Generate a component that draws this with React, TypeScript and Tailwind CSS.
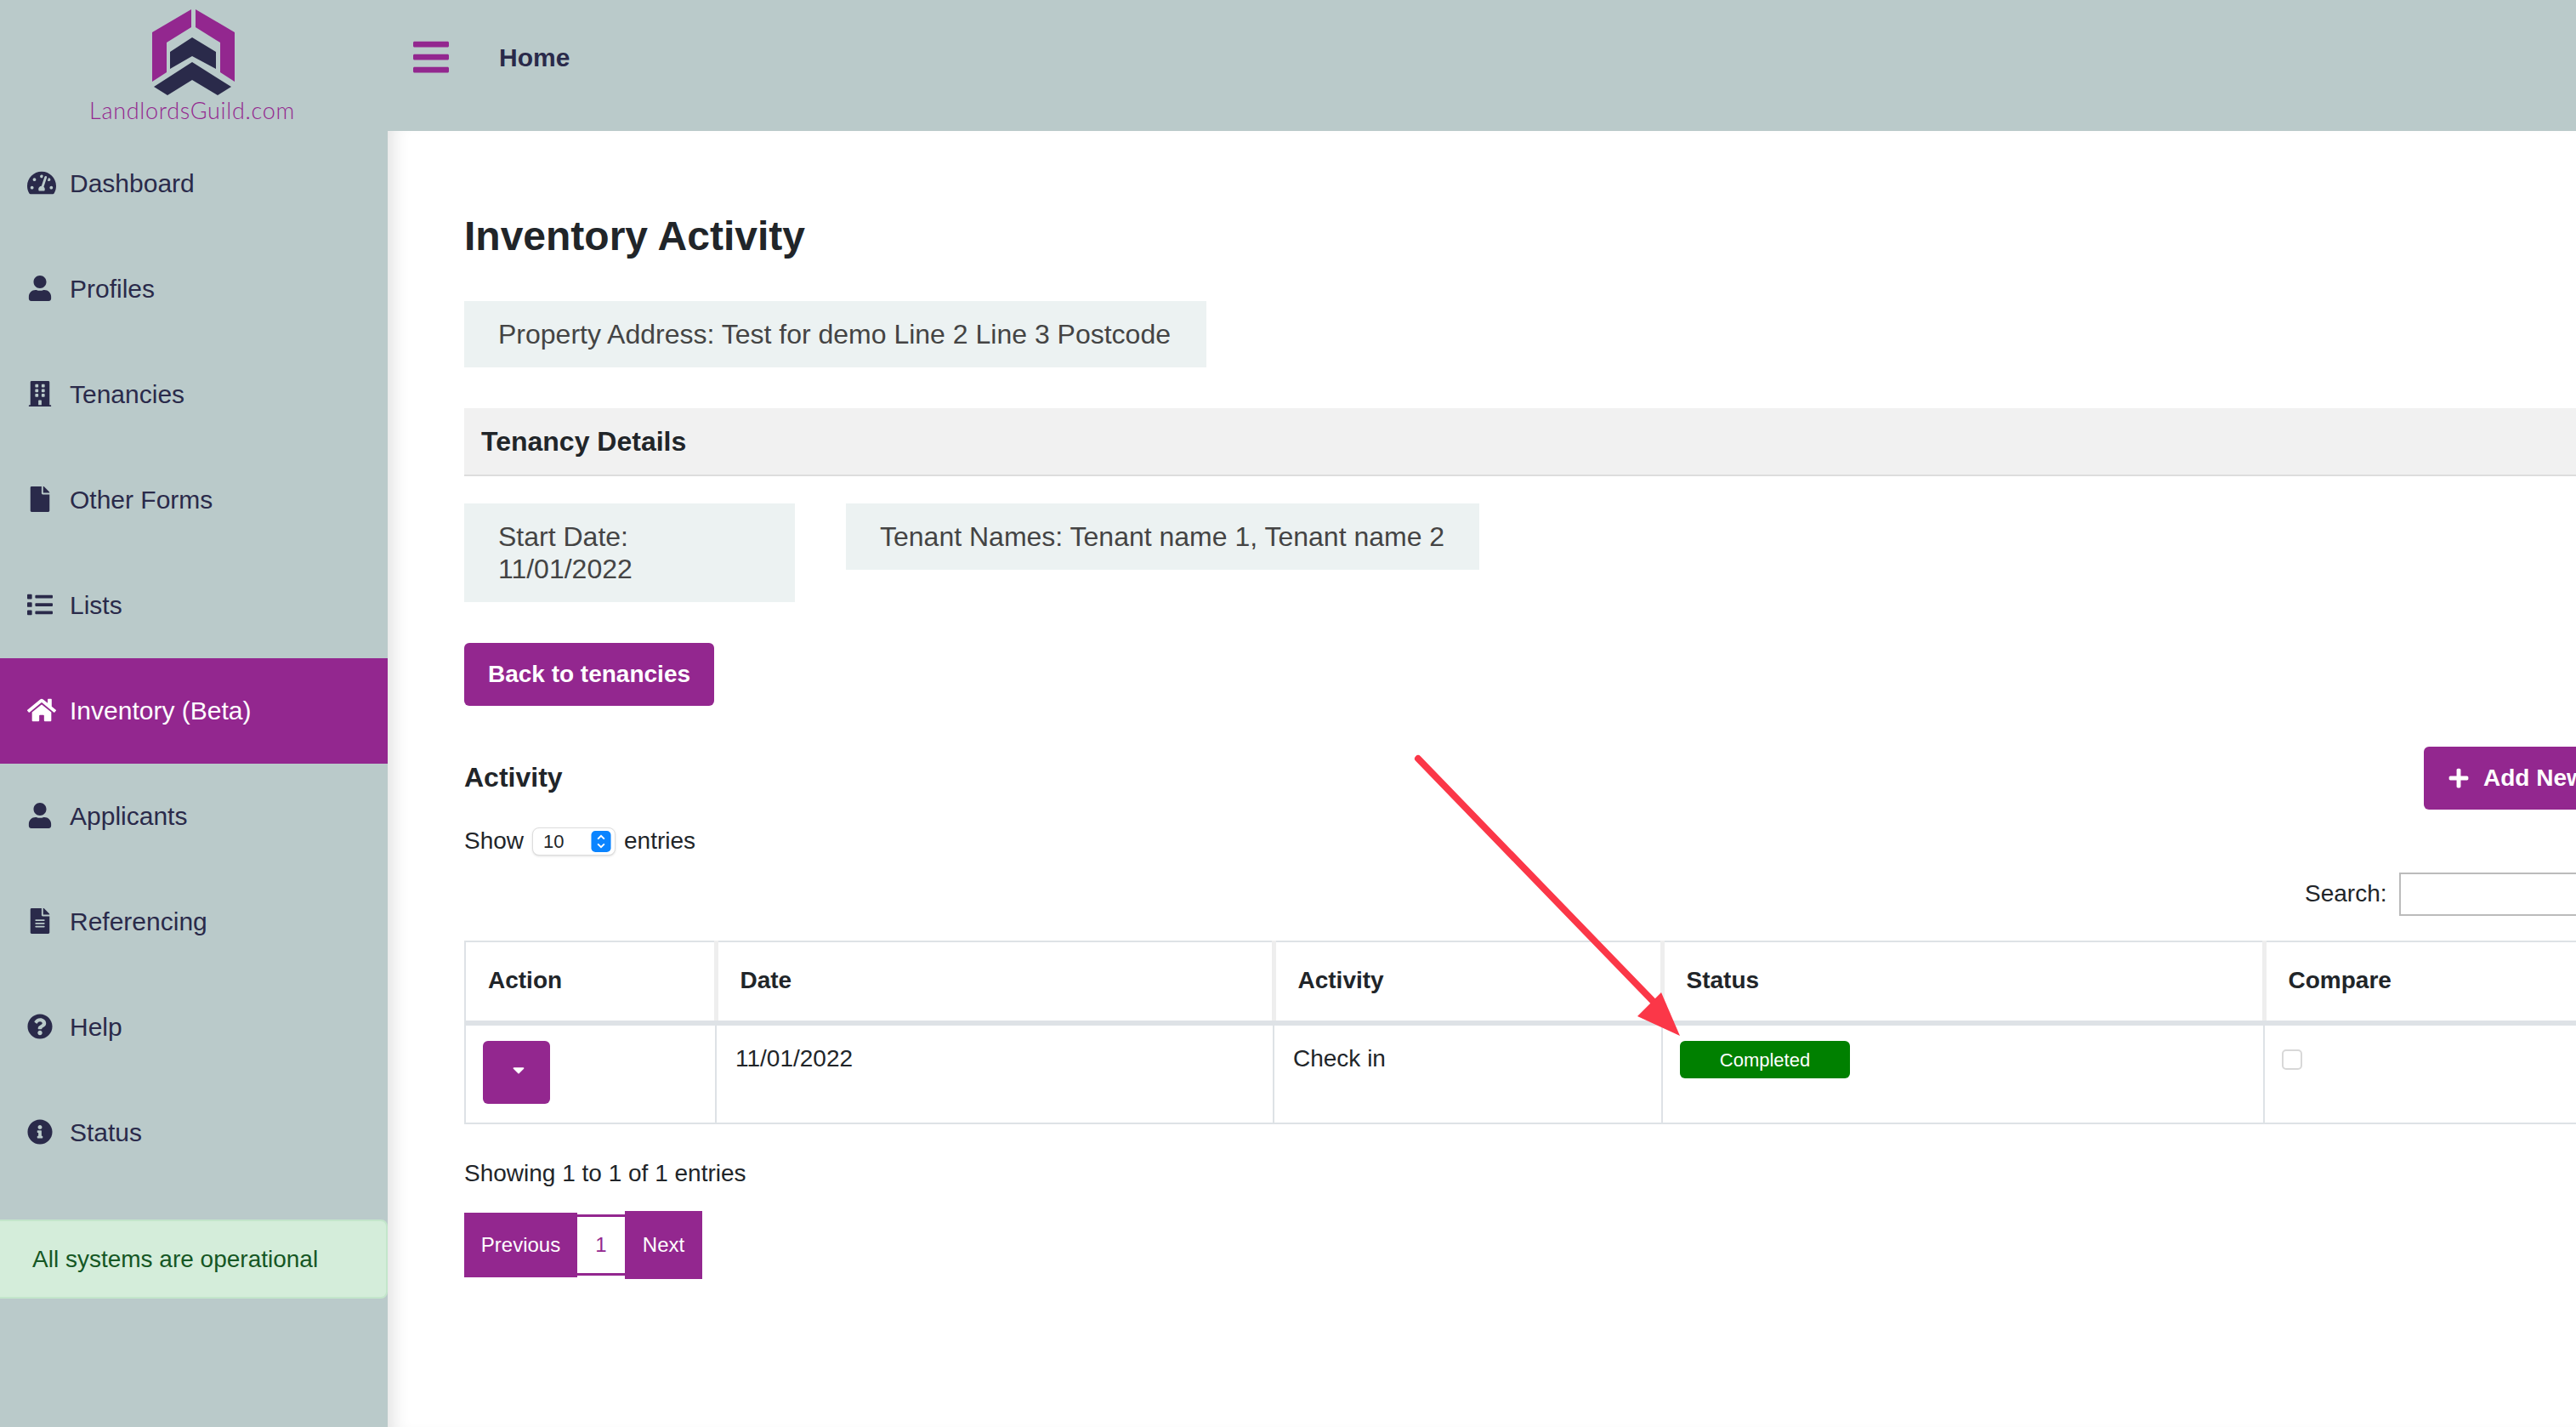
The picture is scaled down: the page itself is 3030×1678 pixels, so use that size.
import React from 'react';
import {
  FaBars,
  FaBuilding,
  FaCaretDown,
  FaFile,
  FaFileAlt,
  FaHome,
  FaInfoCircle,
  FaList,
  FaPlus,
  FaQuestionCircle,
  FaTachometerAlt,
  FaUser,
} from 'react-icons/fa';

const navItems = [
  { label: 'Dashboard', icon: FaTachometerAlt, size: 34 },
  { label: 'Profiles', icon: FaUser, size: 30 },
  { label: 'Tenancies', icon: FaBuilding, size: 30 },
  { label: 'Other Forms', icon: FaFile, size: 30 },
  { label: 'Lists', icon: FaList, size: 30 },
  { label: 'Inventory (Beta)', icon: FaHome, size: 34, active: true },
  { label: 'Applicants', icon: FaUser, size: 30 },
  { label: 'Referencing', icon: FaFileAlt, size: 30 },
  { label: 'Help', icon: FaQuestionCircle, size: 30 },
  { label: 'Status', icon: FaInfoCircle, size: 30 },
];

const Logo = () => (
  <svg viewBox="170 5 110 112" className="w-[110px] h-[112px]">
    <polygon fill="#93278f" points="224,11 178,38 178,96 195,85 195,50 224,32" />
    <polygon fill="#93278f" points="229,11 275,38 275,96 258,85 258,50 229,32" />
    <polygon fill="#2a2a4a" points="225,44 199,61 199,81 225,66 253,81 253,61" />
    <polygon fill="#2a2a4a" points="225,73 180,102 196,112 225,94 255,112 271,102" />
  </svg>
);

const Sidebar = () => (
  <aside className="w-[456px] shrink-0 bg-[#bacaca]">
    <div className="h-[154px] flex flex-col items-center">
      <div className="h-[112px] pt-[5px] pr-[4px]">
        <Logo />
      </div>
      <div className="mt-[1px] pr-[4px] text-[27px] leading-[34px] tracking-[0.7px] font-light text-[#93278f] font-['Lato',sans-serif]">LandlordsGuild.com</div>
    </div>
    <nav>
      {navItems.map((item) => {
        const Icon = item.icon;
        return (
          <a
            key={item.label}
            className={`h-[124px] flex items-center pl-[32px] pb-[2px] text-[30px] ${item.active ? 'bg-[#93278f] text-white' : 'text-[#2a2a4a]'}`}
          >
            <span className="w-[50px] shrink-0">
              <Icon size={item.size} />
            </span>
            {item.label}
          </a>
        );
      })}
    </nav>
    <div className="mt-[40px] h-[93px] flex items-center pl-[38px] bg-[#d4edda] border-2 border-l-0 border-[#c3e6cb] rounded-r-[8px] text-[#155724] text-[28px]">
      All systems are operational
    </div>
  </aside>
);

const InfoBox = ({ children, className = '' }: { children: React.ReactNode; className?: string }) => (
  <div className={`bg-[#ecf2f2] text-[#444444] px-[40px] py-[20px] text-[32px] leading-[38px] ${className}`}>{children}</div>
);

const ActivityTable = () => (
  <table className="table-fixed border-collapse w-[2900px] text-[#212529] text-[28px]">
    <thead>
      <tr className="h-[96px]">
        <th className="w-[295px] pl-[26px] pb-[2px] text-left font-bold border-2 border-[#dee2e6] border-b-[6px]">Action</th>
        <th className="w-[656px] pl-[26px] pb-[2px] text-left font-bold border-2 border-[#dee2e6] border-b-[6px] border-l-[5px] border-l-[#eeeeee]">Date</th>
        <th className="w-[457px] pl-[26px] pb-[2px] text-left font-bold border-2 border-[#dee2e6] border-b-[6px] border-l-[5px] border-l-[#eeeeee]">Activity</th>
        <th className="w-[708px] pl-[26px] pb-[2px] text-left font-bold border-2 border-[#dee2e6] border-b-[6px] border-l-[5px] border-l-[#eeeeee]">Status</th>
        <th className="pl-[26px] pb-[2px] text-left font-bold border-2 border-[#dee2e6] border-b-[6px] border-l-[5px] border-l-[#eeeeee]">Compare</th>
      </tr>
    </thead>
    <tbody>
      <tr className="h-[118px]">
        <td className="pl-[20px] pt-[18px] pb-[20px] align-top border-2 border-[#dee2e6]">
          <button className="w-[79px] h-[74px] bg-[#93278f] rounded-[6px] text-white flex items-center justify-center">
            <FaCaretDown size={22} className="mb-[6px] ml-[4px]" />
          </button>
        </td>
        <td className="pl-[22px] pt-[18px] align-top border-2 border-[#dee2e6]">11/01/2022</td>
        <td className="pl-[22px] pt-[18px] align-top border-2 border-[#dee2e6]">Check in</td>
        <td className="pl-[20px] pt-[18px] align-top border-2 border-[#dee2e6]">
          <span className="w-[200px] h-[44px] bg-[#008000] rounded-[6px] text-white text-[22px] flex items-center justify-center">Completed</span>
        </td>
        <td className="pl-[20px] pt-[28px] align-top border-2 border-[#dee2e6]">
          <div className="w-[24px] h-[24px] bg-white border-2 border-[#d8d8d8] rounded-[5px]" />
        </td>
      </tr>
    </tbody>
  </table>
);

const Pagination = () => (
  <div className="mt-[26px] flex items-center text-[24px]">
    <a className="w-[133px] h-[76px] bg-[#93278f] text-white flex items-center justify-center">Previous</a>
    <a className="w-[56px] h-[72px] bg-white text-[#93278f] border-y-[3px] border-[#93278f] flex items-center justify-center">1</a>
    <a className="w-[91px] h-[80px] bg-[#93278f] text-white flex items-center justify-center">Next</a>
  </div>
);

const Main = () => (
  <main className="flex-1 bg-white pl-[90px] pt-[94px] w-[2900px] shadow-[inset_20px_0_20px_-14px_rgba(0,0,0,0.12)]">
    <h1 className="text-[48px] leading-[60px] font-bold text-[#212529]">Inventory Activity</h1>
    <InfoBox className="mt-[46px] w-[873px]">Property Address: Test for demo Line 2 Line 3 Postcode</InfoBox>

    <div className="mt-[48px] h-[80px] w-[2900px] bg-[#f1f1f1] border-b-2 border-[#dddddd] flex items-center pl-[20px] text-[32px] font-bold text-[#212529]">
      Tenancy Details
    </div>

    <div className="mt-[32px] flex items-start gap-[60px]">
      <InfoBox className="w-[389px]">
        Start Date:
        <br />
        11/01/2022
      </InfoBox>
      <InfoBox className="w-[745px]">Tenant Names: Tenant name 1, Tenant name 2</InfoBox>
    </div>

    <button className="mt-[48px] block w-[294px] h-[74px] bg-[#93278f] rounded-[6px] text-white font-bold text-[28px]">Back to tenancies</button>

    <div className="mt-[48px] w-[2605px] flex items-center justify-between h-[74px]">
      <h2 className="text-[32px] pb-[3px] font-bold text-[#212529]">Activity</h2>
      <button className="w-[300px] h-[74px] bg-[#93278f] rounded-[6px] text-white font-bold text-[28px] flex items-center pl-[28px] gap-[16px] shrink-0">
        <FaPlus size={26} />
        Add New
      </button>
    </div>

    <div className="mt-[20px] h-[34px] flex items-center text-[28px] text-[#212529]">
      Show
      <div className="ml-[10px] mr-[10px] w-[98px] h-[33px] bg-white border border-[#dddddd] rounded-[8px] shadow-sm flex items-center justify-between pl-[12px] pr-[4px] text-[22px]">
        10
        <svg viewBox="0 0 24 26" className="w-[24px] h-[25px]">
          <rect width="24" height="26" rx="5" fill="#0a84ff" />
          <path d="M8 10l4-4 4 4M8 16l4 4 4-4" stroke="white" strokeWidth="2" fill="none" />
        </svg>
      </div>
      entries
    </div>

    <div className="mt-[20px] h-[51px] flex items-center pl-[2165px] text-[28px] text-[#212529]">
      <label className="w-[111px] pb-[2px]">Search:</label>
      <input className="w-[400px] h-[51px] shrink-0 border-2 border-[#bbbbbb] bg-white" />
    </div>

    <div className="mt-[29px]">
      <ActivityTable />
    </div>

    <p className="mt-[40px] text-[28px] leading-[36px] text-[#212529]">Showing 1 to 1 of 1 entries</p>
    <Pagination />
  </main>
);

// annotation drawn over the screenshot
const Arrow = () => (
  <svg className="absolute left-0 top-0 pointer-events-none" width="3030" height="1678">
    <line x1="1668" y1="892" x2="1945" y2="1178" stroke="#fb3748" strokeWidth="8" strokeLinecap="round" />
    <polygon fill="#fb3748" points="1954,1167 1926,1195 1976,1218" />
  </svg>
);

export default function App() {
  return (
    <div className="relative w-[3030px] h-[1678px] flex overflow-hidden font-['Liberation_Sans',Arial,sans-serif] bg-[#bacaca]">
      <Sidebar />
      <div className="flex-1 min-w-0 flex flex-col">
        <header className="h-[154px] shrink-0 flex items-center pl-[27px] pb-[20px]">
          <FaBars size={48} className="text-[#93278f]" />
          <span className="ml-[56px] text-[30px] font-bold text-[#2a2a4a]">Home</span>
        </header>
        <Main />
      </div>
      <Arrow />
    </div>
  );
}
